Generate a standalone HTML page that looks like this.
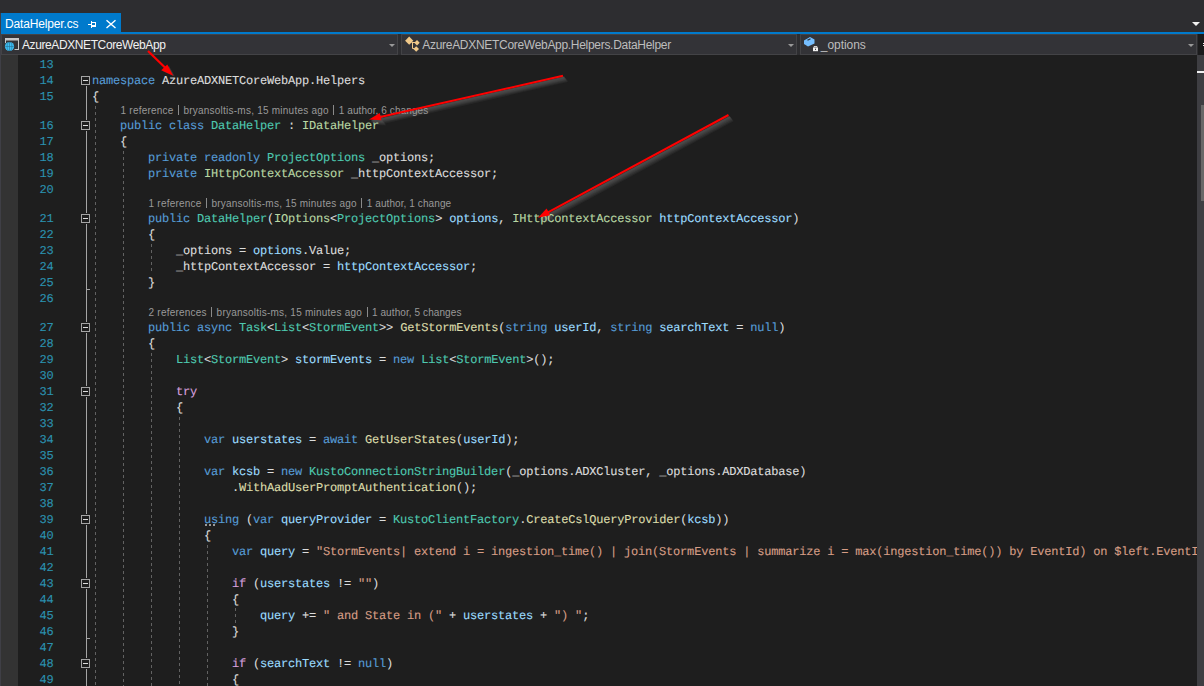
<!DOCTYPE html>
<html><head><meta charset="utf-8"><title>DataHelper.cs</title>
<style>
html,body{margin:0;padding:0;}
body{width:1204px;height:686px;overflow:hidden;background:#2d2d30;position:relative;font-family:"Liberation Sans",sans-serif;}
#tab{position:absolute;left:1px;top:13px;width:120px;height:19px;background:#007acc;color:#fff;font-size:12px;}
#tab .tt{position:absolute;left:4px;top:4px;letter-spacing:-0.15px;white-space:nowrap;line-height:14px;}
#blue{position:absolute;left:0;top:32px;width:1204px;height:2px;background:#007acc;}
#nav{position:absolute;left:0;top:34px;width:1204px;height:21px;background:#2d2d30;}
.dd{position:absolute;top:0px;height:19px;background:#333337;border:1px solid #434346;box-sizing:content-box;color:#bdbdbd;font-size:12px;white-space:nowrap;}
.dd .tx{position:absolute;top:3px;line-height:14px;letter-spacing:-0.4px;}
.dd .ar{position:absolute;right:2px;top:9px;width:0;height:0;border-left:3.5px solid transparent;border-right:3.5px solid transparent;border-top:3.5px solid #999;}
#ed{position:absolute;left:0;top:55px;width:1204px;height:631px;background:#1e1e1e;}
#im{position:absolute;left:1px;top:55px;width:17px;height:631px;background:#333333;}
#le{position:absolute;left:0;top:13px;width:1px;height:673px;background:#3f3f46;}
.ln,.cd{position:absolute;font-family:"Liberation Mono",monospace;font-size:12px;letter-spacing:-0.2px;text-rendering:geometricPrecision;-webkit-text-stroke:0.12px;line-height:16px;height:16px;white-space:pre;margin-top:1px;}
.ln{left:25px;width:28.5px;text-align:right;color:#2b91af;}
.cd{color:#dcdcdc;}
.k{color:#569cd6}.t{color:#4ec9b0}.i{color:#b8d7a3}.v{color:#9cdcfe}.m{color:#dcdcaa}.s{color:#d69d85}.c{color:#d8a0df}
.cl{position:absolute;font-size:10px;line-height:13px;height:13px;color:#999;white-space:pre;}
.cl .bar{display:inline-block;width:1px;height:10px;background:#8a8a8a;margin:0 4.3px 0 4.6px;vertical-align:-0.6px;}
.ol{position:absolute;width:1px;background:#a5a5a5;}
.tick{position:absolute;width:4px;height:1px;background:#a5a5a5;}
.bx{position:absolute;left:81px;width:7px;height:7px;border:1px solid #a5a5a5;background:#1e1e1e;box-shadow:0 -1px 0 #1e1e1e,0 1px 0 #1e1e1e;}
.bx i{position:absolute;left:1px;top:3px;width:5px;height:1px;background:#dcdcdc;}
.dot{position:absolute;width:2px;height:2px;background:#9a9a9a;}
.ig{position:absolute;width:1px;background:repeating-linear-gradient(to bottom,#626262 0,#626262 3px,transparent 3px,transparent 6px);}
#sb{position:absolute;left:1197px;top:55px;width:7px;height:631px;background:#3e3e42;}
#sb .mk{position:absolute;left:0;top:16px;width:7px;height:2px;background:#f0f0f0;}
#sb .th{position:absolute;left:4px;top:50px;width:3px;height:96px;background:#686868;}
#spl{position:absolute;left:1198px;top:34px;width:6px;height:21px;background:#1b1b1c;}
svg{position:absolute;left:0;top:0;}
</style></head><body>
<div id="tab"><span class="tt">DataHelper.cs</span></div>
<div id="blue"></div>
<div id="nav">
 <div class="dd" style="left:1px;width:395px;color:#f1f1f1"><span class="tx" style="left:20px">AzureADXNETCoreWebApp</span><span class="ar"></span></div>
 <div class="dd" style="left:401px;width:394px"><span class="tx" style="left:20.3px;letter-spacing:-0.3px">AzureADXNETCoreWebApp.Helpers.DataHelper</span><span class="ar"></span></div>
 <div class="dd" style="left:800px;width:395px"><span class="tx" style="left:19.8px;letter-spacing:-0.06px">_options</span><span class="ar"></span></div>
</div>
<div id="spl"></div>
<div id="ed"></div><div id="le"></div><div id="im"></div>
<svg width="1204" height="686" viewBox="0 0 1204 686">
 <g transform="translate(4.6 5.4)" stroke="#272727" fill="#272727" stroke-width="2"><path d="M563 75.7L378 117.6"/><path d="M369 119.5L379.8 113L381.4 120.2Z" stroke="none"/><path d="M728.5 115L547 212.8"/><path d="M538 217.7L546.6 208.6L550.2 215.2Z" stroke="none"/></g>
 <g transform="translate(3.8 4.5)" stroke="#303030" fill="#303030" stroke-width="2"><path d="M563 75.7L378 117.6"/><path d="M369 119.5L379.8 113L381.4 120.2Z" stroke="none"/><path d="M728.5 115L547 212.8"/><path d="M538 217.7L546.6 208.6L550.2 215.2Z" stroke="none"/></g>
 <g transform="translate(3 3.6)" stroke="#3a3a3a" fill="#3a3a3a" stroke-width="2"><path d="M563 75.7L378 117.6"/><path d="M369 119.5L379.8 113L381.4 120.2Z" stroke="none"/><path d="M728.5 115L547 212.8"/><path d="M538 217.7L546.6 208.6L550.2 215.2Z" stroke="none"/></g>
 <g transform="translate(2.2 2.7)" stroke="#424242" fill="#424242" stroke-width="2"><path d="M563 75.7L378 117.6"/><path d="M369 119.5L379.8 113L381.4 120.2Z" stroke="none"/><path d="M728.5 115L547 212.8"/><path d="M538 217.7L546.6 208.6L550.2 215.2Z" stroke="none"/></g>
 <g transform="translate(1.4 1.8)" stroke="#4a4a4a" fill="#4a4a4a" stroke-width="2"><path d="M563 75.7L378 117.6"/><path d="M369 119.5L379.8 113L381.4 120.2Z" stroke="none"/><path d="M728.5 115L547 212.8"/><path d="M538 217.7L546.6 208.6L550.2 215.2Z" stroke="none"/></g>
 <path d="M174.8 76.6L163.2 71.4L169 66Z" fill="#3a3a3a"/>
</svg>
<div class="ln" style="top:56px">13</div>
<div class="ln" style="top:72px">14</div>
<div class="ln" style="top:88px">15</div>
<div class="ln" style="top:117px">16</div>
<div class="ln" style="top:133px">17</div>
<div class="ln" style="top:149px">18</div>
<div class="ln" style="top:165px">19</div>
<div class="ln" style="top:181px">20</div>
<div class="ln" style="top:210px">21</div>
<div class="ln" style="top:226px">22</div>
<div class="ln" style="top:242px">23</div>
<div class="ln" style="top:258px">24</div>
<div class="ln" style="top:274px">25</div>
<div class="ln" style="top:290px">26</div>
<div class="ln" style="top:319px">27</div>
<div class="ln" style="top:335px">28</div>
<div class="ln" style="top:351px">29</div>
<div class="ln" style="top:367px">30</div>
<div class="ln" style="top:383px">31</div>
<div class="ln" style="top:399px">32</div>
<div class="ln" style="top:415px">33</div>
<div class="ln" style="top:431px">34</div>
<div class="ln" style="top:447px">35</div>
<div class="ln" style="top:463px">36</div>
<div class="ln" style="top:479px">37</div>
<div class="ln" style="top:495px">38</div>
<div class="ln" style="top:511px">39</div>
<div class="ln" style="top:527px">40</div>
<div class="ln" style="top:543px">41</div>
<div class="ln" style="top:559px">42</div>
<div class="ln" style="top:575px">43</div>
<div class="ln" style="top:591px">44</div>
<div class="ln" style="top:607px">45</div>
<div class="ln" style="top:623px">46</div>
<div class="ln" style="top:639px">47</div>
<div class="ln" style="top:655px">48</div>
<div class="ln" style="top:671px">49</div>
<div class="cd" style="top:72px;left:92px"><span class="k">namespace</span> AzureADXNETCoreWebApp.Helpers</div>
<div class="cd" style="top:88px;left:92px">{</div>
<div class="cd" style="top:117px;left:120px"><span class="k">public class</span> <span class="t">DataHelper</span> : <span class="i">IDataHelper</span></div>
<div class="cd" style="top:133px;left:120px">{</div>
<div class="cd" style="top:149px;left:148px"><span class="k">private readonly</span> <span class="t">ProjectOptions</span> _options;</div>
<div class="cd" style="top:165px;left:148px"><span class="k">private</span> <span class="i">IHttpContextAccessor</span> _httpContextAccessor;</div>
<div class="cd" style="top:210px;left:148px"><span class="k">public</span> <span class="t">DataHelper</span>(<span class="i">IOptions</span>&lt;<span class="t">ProjectOptions</span>&gt; <span class="v">options</span>, <span class="i">IHttpContextAccessor</span> <span class="v">httpContextAccessor</span>)</div>
<div class="cd" style="top:226px;left:148px">{</div>
<div class="cd" style="top:242px;left:176px">_options = <span class="v">options</span>.Value;</div>
<div class="cd" style="top:258px;left:176px">_httpContextAccessor = <span class="v">httpContextAccessor</span>;</div>
<div class="cd" style="top:274px;left:148px">}</div>
<div class="cd" style="top:319px;left:148px"><span class="k">public async</span> <span class="t">Task</span>&lt;<span class="t">List</span>&lt;<span class="t">StormEvent</span>&gt;&gt; <span class="m">GetStormEvents</span>(<span class="k">string</span> <span class="v">userId</span>, <span class="k">string</span> <span class="v">searchText</span> = <span class="k">null</span>)</div>
<div class="cd" style="top:335px;left:148px">{</div>
<div class="cd" style="top:351px;left:176px"><span class="t">List</span>&lt;<span class="t">StormEvent</span>&gt; <span class="v">stormEvents</span> = <span class="k">new</span> <span class="t">List</span>&lt;<span class="t">StormEvent</span>&gt;();</div>
<div class="cd" style="top:383px;left:176px"><span class="c">try</span></div>
<div class="cd" style="top:399px;left:176px">{</div>
<div class="cd" style="top:431px;left:204px"><span class="k">var</span> <span class="v">userstates</span> = <span class="k">await</span> <span class="m">GetUserStates</span>(<span class="v">userId</span>);</div>
<div class="cd" style="top:463px;left:204px"><span class="k">var</span> <span class="v">kcsb</span> = <span class="k">new</span> <span class="t">KustoConnectionStringBuilder</span>(_options.ADXCluster, _options.ADXDatabase)</div>
<div class="cd" style="top:479px;left:232px">.<span class="m">WithAadUserPromptAuthentication</span>();</div>
<div class="cd" style="top:511px;left:204px"><span class="k">using</span> (<span class="k">var</span> <span class="v">queryProvider</span> = <span class="t">KustoClientFactory</span>.<span class="m">CreateCslQueryProvider</span>(<span class="v">kcsb</span>))</div>
<div class="cd" style="top:527px;left:204px">{</div>
<div class="cd" style="top:543px;left:232px"><span class="k">var</span> <span class="v">query</span> = <span class="s">"StormEvents| extend i = ingestion_time() | join(StormEvents | summarize i = max(ingestion_time()) by EventId) on $left.EventId</span></div>
<div class="cd" style="top:575px;left:232px"><span class="c">if</span> (<span class="v">userstates</span> != <span class="s">""</span>)</div>
<div class="cd" style="top:591px;left:232px">{</div>
<div class="cd" style="top:607px;left:260px"><span class="v">query</span> += <span class="s">" and State in ("</span> + <span class="v">userstates</span> + <span class="s">") "</span>;</div>
<div class="cd" style="top:623px;left:232px">}</div>
<div class="cd" style="top:655px;left:232px"><span class="c">if</span> (<span class="v">searchText</span> != <span class="k">null</span>)</div>
<div class="cd" style="top:671px;left:232px">{</div>
<div class="cl" style="top:104px;left:120.6px"><span style="letter-spacing:0.21px">1 reference</span><span class="bar"></span><span style="letter-spacing:0.235px">bryansoltis-ms, 15 minutes ago</span><span class="bar"></span><span style="letter-spacing:0.09px">1 author, 6 changes</span></div>
<div class="cl" style="top:197px;left:148.6px"><span style="letter-spacing:0.21px">1 reference</span><span class="bar"></span><span style="letter-spacing:0.235px">bryansoltis-ms, 15 minutes ago</span><span class="bar"></span><span style="letter-spacing:0.09px">1 author, 1 change</span></div>
<div class="cl" style="top:306px;left:148.6px"><span style="letter-spacing:0.21px">2 references</span><span class="bar"></span><span style="letter-spacing:0.235px">bryansoltis-ms, 15 minutes ago</span><span class="bar"></span><span style="letter-spacing:0.09px">1 author, 5 changes</span></div>
<div class="ol" style="left:86px;top:86px;height:600px"></div>
<div class="tick" style="left:86px;top:289px"></div>
<div class="tick" style="left:86px;top:638px"></div>
<div class="dot" style="left:205px;top:524px"></div>
<div class="dot" style="left:209px;top:524px"></div>
<div class="dot" style="left:213px;top:524px"></div>
<div class="bx" style="top:76px"><i></i></div>
<div class="bx" style="top:121px"><i></i></div>
<div class="bx" style="top:214px"><i></i></div>
<div class="bx" style="top:323px"><i></i></div>
<div class="bx" style="top:387px"><i></i></div>
<div class="bx" style="top:515px"><i></i></div>
<div class="bx" style="top:579px"><i></i></div>
<div class="bx" style="top:659px"><i></i></div>
<div class="ig" style="left:95px;top:106px;height:580px"></div>
<div class="ig" style="left:123px;top:151px;height:535px"></div>
<div class="ig" style="left:151px;top:244px;height:28px"></div>
<div class="ig" style="left:151px;top:353px;height:333px"></div>
<div class="ig" style="left:179px;top:417px;height:269px"></div>
<div class="ig" style="left:207px;top:545px;height:141px"></div>
<div class="ig" style="left:235px;top:608px;height:15px"></div>
<div id="sb"><div class="mk"></div><div class="th"></div></div>
<svg width="1204" height="686" viewBox="0 0 1204 686">
 <!-- tab icons -->
 <g stroke="#fff" fill="none" stroke-width="1" shape-rendering="crispEdges">
  <path d="M88 24.5H91 M91.5 21V28 M92 22.5H96 M95.5 22V27 M92 25.5H96 M92 26.5H96"/>
 </g>
 <path d="M106.5 20.2L115.5 28 M115.5 20.2L106.5 28" stroke="#fff" stroke-width="1.4" fill="none"/>
 <path d="M1192 22H1200L1196 26Z" fill="#f1f1f1"/>
 <path d="M1203 43.5H1204 M1203 45.5H1204" stroke="#f1f1f1" stroke-width="1" shape-rendering="crispEdges"/>
 <!-- web project icon -->
 <path d="M5 38H19V50H14.5V49H18V40.5H6V43H5Z" fill="#c8c8c8"/>
 <circle cx="9.5" cy="46.5" r="4.6" fill="#3dbef5"/>
 <g stroke="#1c4a60" stroke-width="0.55" fill="none" opacity="0.7">
  <path d="M5.2 46.5H13.8 M9.5 42.2V50.8"/>
  <ellipse cx="9.5" cy="46.5" rx="2.4" ry="4.3"/>
 </g>
 <!-- class icon -->
 <g fill="#f0c98a">
  <path d="M409.2 36.6L413.3 40.7L409.2 44.8L405.1 40.7Z"/>
  <path d="M417 40L419.7 42.7L417 45.4L414.3 42.7Z"/>
  <path d="M416.2 46.2L419 49L416.2 51.8L413.4 49Z"/>
 </g>
 <path d="M411.5 42.5H415 M412.5 42.5V48.5H414.5" stroke="#f0c98a" stroke-width="1" fill="none"/>
 <!-- field icon -->
 <path d="M804 40.5L810 37L814.5 39.5V43.5L808 46.5L804 44Z" fill="#75beff"/>
 <path d="M807.5 40.3L810.5 38.7" stroke="#2d2d30" stroke-width="1.2" fill="none"/>
 <path d="M813 47.5H818V51.2H813Z" fill="#f1f1f1"/>
 <path d="M814 47.5V46.6H817V47.5" stroke="#f1f1f1" stroke-width="0.9" fill="none"/>
 <rect x="815" y="48.7" width="1" height="1.2" fill="#2d2d30"/>
 <!-- arrows -->
 <g fill="none" stroke-linecap="butt">
  <path d="M148 51L166 68.5" stroke="#ff0000" stroke-width="2.2"/>
  <path d="M563 75.7L378 117.6" stroke="#ff0000" stroke-width="2"/>
  <path d="M728.5 115L547 212.8" stroke="#ff0000" stroke-width="2"/>
 </g>
 <g fill="#ff0000">
  <path d="M173.3 75.8L161.2 70.2L167.3 64.6Z"/>
  <path d="M369 119.5L379.8 113L381.4 120.2Z"/>
  <path d="M538 217.7L546.6 208.6L550.2 215.2Z"/>
 </g>
</svg>
</body></html>
